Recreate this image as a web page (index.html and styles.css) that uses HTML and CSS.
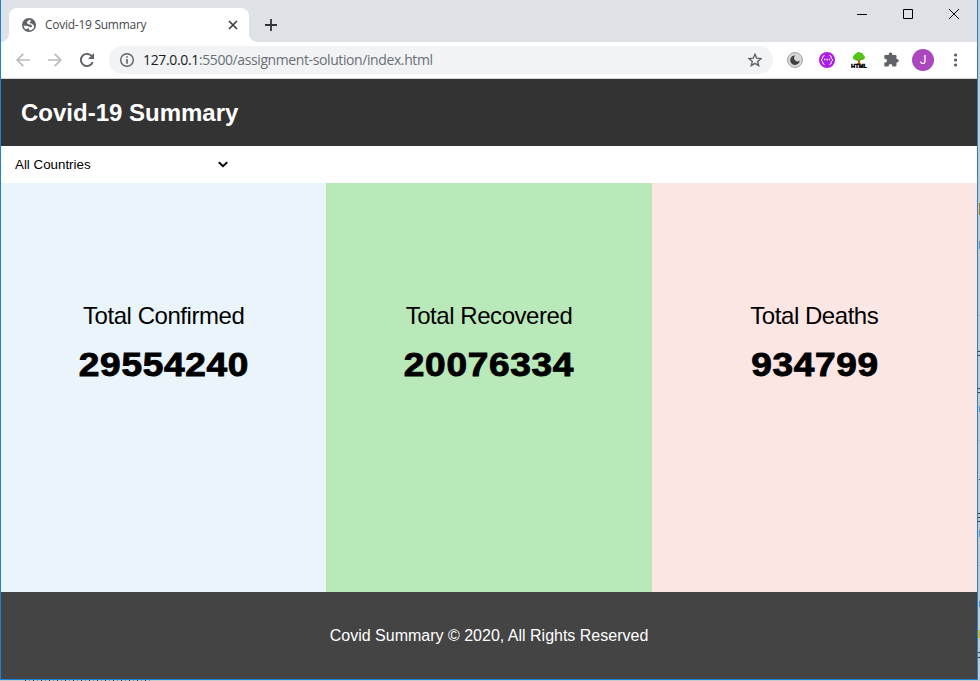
FILE: index.html
```html
<!DOCTYPE html>
<html lang="en">
<head>
<meta charset="utf-8">
<title>Covid-19 Summary</title>
<link rel="stylesheet" href="styles.css">
</head>
<body>
<div class="window">
  <div class="tabstrip">
    <div class="tab">
      <svg class="globe" width="14" height="14" viewBox="0 0 14 14"><circle cx="7" cy="7" r="7" fill="#5f6368"/><path d="M8.200 1.600L5.200 3.400 5 5.200 7 6.400 9.400 6.800 10 8.800 8.600 9.600 5.800 8 1.500 7.600Q1.800 9.800 3.600 11.200L6.800 10.200 7.400 12.500Q10.800 12.300 12.200 9.200L11.600 7 9.400 5.400 7.200 4.800 8.800 3.600z" fill="#fff"/></svg>
      <span class="tab-title">Covid-19 Summary</span>
      <svg class="close" width="10" height="10" viewBox="0 0 10 10"><path d="M1 1l8 8M9 1L1 9" stroke="#3c4043" stroke-width="1.7"/></svg>
    </div>
    <svg class="plus" width="12" height="12" viewBox="0 0 12 12"><path d="M6 0v12M0 6h12" stroke="#303236" stroke-width="1.8"/></svg>
    <div class="controls">
      <svg width="10" height="10" viewBox="0 0 10 10"><path d="M0 5.500h10" stroke="#000"/></svg>
      <svg width="10" height="10" viewBox="0 0 10 10"><path d="M.5.5h9v9h-9z" fill="none" stroke="#000"/></svg>
      <svg width="10" height="10" viewBox="0 0 10 10"><path d="M0 0l10 10M10 0L0 10" stroke="#000"/></svg>
    </div>
  </div>
  <div class="toolbar">
    <div class="nav">
      <svg width="14" height="14" viewBox="0 0 14 14"><path d="M14 7H1.500M7.300.8L1.200 7l6.100 6.200" fill="none" stroke="#b9bbbe" stroke-width="1.700"/></svg>
      <svg width="14" height="14" viewBox="0 0 14 14"><path d="M0 7h12.500M6.700.8L12.800 7l-6.100 6.200" fill="none" stroke="#b9bbbe" stroke-width="1.700"/></svg>
      <svg width="14" height="14" viewBox="0 0 14 14"><path d="M12.700 9.100A6.100 6.100 0 1 1 11.300 2.700L13 4.300" fill="none" stroke="#5f6368" stroke-width="1.900"/><path d="M14 0v6H8z" fill="#5f6368"/></svg>
    </div>
    <div class="address">
      <svg width="14" height="14" viewBox="0 0 14 14"><circle cx="7" cy="7" r="6.300" fill="none" stroke="#5f6368" stroke-width="1.400"/><path d="M7 3.200v1.600M7 6v4.800" stroke="#5f6368" stroke-width="1.600"/></svg>
      <span class="url"><b>127.0.0.1</b>:5500/assignment-solution/index.html</span>
      <svg class="star" width="14" height="14" viewBox="0 0 14 14"><path d="M7 1.200l1.700 4 4.300.4-3.300 2.800 1 4.200L7 10.400l-3.700 2.200 1-4.200L1 5.600l4.300-.4z" fill="none" stroke="#5f6368" stroke-width="1.400"/></svg>
    </div>
    <div class="extensions">
      <svg width="16" height="16" viewBox="0 0 16 16"><circle cx="8" cy="8" r="7.500" fill="#d6d6d6" stroke="#a5a5a5"/><path d="M8.400 3.400A4.800 4.800 0 1 0 12.800 8.600 3.300 3.300 0 0 1 8.400 3.400z" fill="#3d3f42"/></svg>
      <svg width="16" height="16" viewBox="0 0 16 16"><circle cx="8" cy="8" r="8" fill="#ad1fe8"/><path d="M5.500 3.500Q3.800 3.500 3.800 5.200T2 8q1.800.8 1.800 2.600t1.700 1.900M10.500 3.500q1.700 0 1.700 1.700T14 8q-1.800.8-1.800 2.600t-1.700 1.900" fill="none" stroke="#fff"/><path d="M5 7.500h1.300M7.400 7.500h1.300M9.800 7.500h1.300" stroke="#fff" stroke-width="1.300"/></svg>
      <svg width="16" height="16" viewBox="0 0 16 16"><path d="M7 7h2v4l1.500 1h-5L7 11z" fill="#b0661c"/><path d="M5 1.500Q7-.8 10 .7q2 .1 2.500 2.300 2.300 1.800 1 3.800-1.500 1.800-5 1-3 1.300-5.500-.3-2.200-2-.3-3.700Q3 2 5 1.500z" fill="#55c51a"/><path d="M5 7l3 2.700L11.500 6" fill="none" stroke="#8b701c" stroke-width=".8"/><text class="html-label" x="0" y="16" textLength="16" lengthAdjust="spacingAndGlyphs">HTML</text></svg>
      <svg width="16" height="16" viewBox="0 0 16 16"><path d="M2.400 3h3.300v-.6a1.800 1.800 0 0 1 3.600 0V3h3.200q1 0 1 1v3h.5a1.800 1.800 0 0 1 0 3.600h-.5v3q0 1-1 1H9.300v-.8a1.800 1.800 0 0 0-3.600 0v.8H2.300q-1 0-1-1V10.600h.8a1.900 1.900 0 0 0 0-3.800h-.8V4q0-1 1.100-1z" fill="#5f6368"/></svg>
    </div>
    <div class="avatar">J</div>
    <svg class="menu" width="4" height="14" viewBox="0 0 4 14"><g fill="#5f6368"><circle cx="2.500" cy="2" r="1.600"/><circle cx="2.500" cy="7" r="1.600"/><circle cx="2.500" cy="12" r="1.600"/></g></svg>
  </div>
  <header class="header"><h1>Covid-19 Summary</h1></header>
  <div class="filter">
    <span>All Countries</span>
    <svg width="10" height="7" viewBox="0 0 10 7"><path d="M.8 1.200L5 5.200l4.200-4" fill="none" stroke="#000" stroke-width="2"/></svg>
  </div>
  <main class="stats">
    <section class="stat confirmed"><h2>Total Confirmed</h2><p>29554240</p></section>
    <section class="stat recovered"><h2>Total Recovered</h2><p>20076334</p></section>
    <section class="stat deaths"><h2>Total Deaths</h2><p>934799</p></section>
  </main>
  <footer class="footer">Covid Summary © 2020, All Rights Reserved</footer>
</div>
<svg class="backdrop" width="2" height="681" viewBox="0 0 2 681">
  <path d="M0 315.500h2M0 440.500h2M0 565.500h2" stroke="#b5b5b5"/>
  <path d="M1.500 203v12" stroke="#a87832"/>
  <path d="M1.500 241v8M1.500 406v6M1.500 530v7M1.500 601v6" stroke="#5b8fc9"/>
  <path d="M0 351.500h2M0 355.500h2M0 388.500h2M0 392.500h2M1 479.500h1M0 513.500h2M0 517.500h2M0 521.500h2M0 652.500h2M0 657.500h2" stroke="#333"/>
  <path d="M1 630v8" stroke="#c4b648" stroke-width="2"/>
</svg>
<div class="backdrop-line"></div>
</body>
</html>
```
FILE: styles.css
```css
* { box-sizing: border-box; }
body {
  display: grid;
  grid-template: 680px 1px / 978px 2px;
  margin: 0;
  height: 681px;
  overflow: hidden;
  background: #c9c9c9;
  font-family: "Liberation Sans", Arial, sans-serif;
  color: #000;
}
svg { display: block; flex: none; }
.backdrop { grid-area: 1 / 2 / 3 / 3; }
.backdrop-line {
  width: 128px;
  height: 1px;
  margin-left: 25px;
  background: repeating-linear-gradient(90deg, #333 0 1px, #c9c9c9 1px 4px, #6f8fb5 4px 5px, #c9c9c9 5px 8px);
}
.window {
  display: flex;
  flex-direction: column;
  height: 680px;
  border: solid #1883d7;
  border-width: 0 1px 1px;
  background: #fff;
}
.tabstrip {
  display: flex;
  height: 42px;
  flex: none;
  padding: 8px 18px 0 8px;
  background: #dee1e6;
}
.tab {
  position: relative;
  display: flex;
  align-items: center;
  width: 240px;
  height: 34px;
  padding: 0 11px 0 13px;
  border-radius: 8px 8px 0 0;
  background: #fff;
}
.tab::before, .tab::after {
  content: "";
  position: absolute;
  bottom: 0;
  width: 8px;
  height: 8px;
}
.tab::before { left: -8px; background: radial-gradient(circle at 0 0, #dee1e6 7.5px, #fff 8px); }
.tab::after { right: -8px; background: radial-gradient(circle at 100% 0, #dee1e6 7.5px, #fff 8px); }
.tab-title {
  flex: 1;
  margin: -1px 0 0 9px;
  font: 12px "Open Sans", "Noto Sans", sans-serif;
  letter-spacing: -0.27px;
  color: #45484c;
}
.plus { margin: 11px 0 0 16px; }
.controls {
  display: flex;
  gap: 36px;
  margin: 1px 0 0 auto;
}
.toolbar {
  display: flex;
  align-items: center;
  flex: none;
  height: 37px;
  padding: 0 20px 0 15px;
  border-bottom: 1px solid #d5d5d8;
}
.nav { display: flex; gap: 18px; }
.address {
  display: flex;
  align-items: center;
  width: 664px;
  height: 28px;
  margin-left: 15px;
  padding: 0 11px;
  border-radius: 14px;
  background: #f1f3f4;
}
.url {
  flex: 1;
  margin: -1px 0 0 9px;
  font: 14px "Open Sans", "Noto Sans", sans-serif;
  letter-spacing: -0.4px;
  color: #6b6f74;
  white-space: nowrap;
}
.url b { font-weight: 400; color: #202124; letter-spacing: -0.35px; }
.extensions { display: flex; gap: 16px; margin-left: 14px; }
.html-label { font: 900 6px "Liberation Sans", Arial, sans-serif; stroke: #000; stroke-width: .5px; }
.avatar {
  width: 22px;
  height: 22px;
  margin: 0 19px 0 13px;
  border-radius: 50%;
  background: #ab47bc;
  color: #fff;
  font: 12px/22px Roboto, sans-serif;
  text-align: center;
}
.header {
  display: flex;
  align-items: center;
  flex: none;
  height: 67px;
  padding: 0 20px;
  background: #333;
  color: #fff;
}
.header h1 { margin: 0; font-size: 24px; line-height: 28px; }
.filter {
  display: flex;
  align-items: center;
  justify-content: space-between;
  flex: none;
  width: 241px;
  height: 37px;
  padding: 0 14px;
  font-size: 13.333px;
}
.stats {
  display: grid;
  grid-template-columns: repeat(3, 1fr);
  height: 409px;
  flex: none;
}
.stat { padding-top: 118px; text-align: center; }
.stat h2 { margin: 0; font-size: 24px; line-height: 30px; font-weight: 400; letter-spacing: -0.45px; }
.stat p {
  margin: 15px 0 0;
  font-size: 32.5px;
  line-height: 38px;
  font-weight: 700;
  letter-spacing: 0.6px;
  text-indent: 0.6px;
  transform: scaleX(1.14);
  -webkit-text-stroke: 0.9px #000;
}
.confirmed { background: #eaf5fb; }
.recovered { background: #b9e8b9; }
.deaths { background: #fce6e4; }
.footer {
  flex: 1;
  background: #444;
  color: #fff;
  font-size: 16px;
  line-height: 87px;
  text-align: center;
}
```
